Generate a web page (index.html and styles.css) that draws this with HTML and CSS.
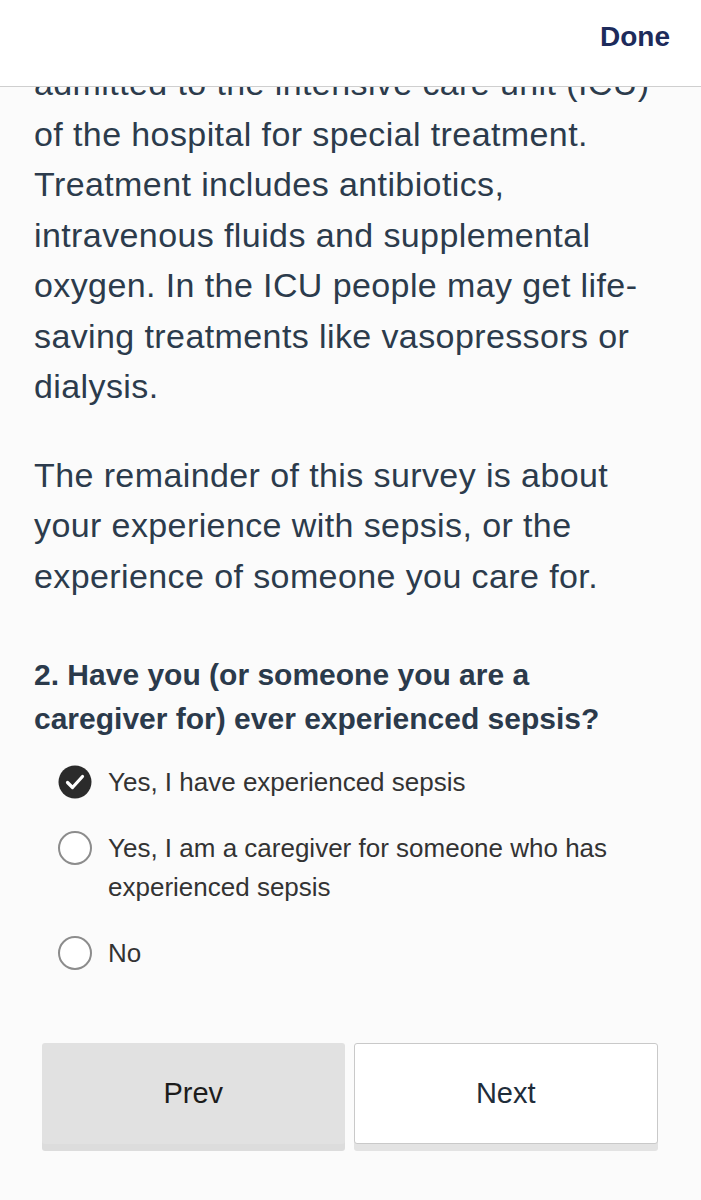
FILE: index.html
```html
<!DOCTYPE html>
<html>
<head>
<meta charset="utf-8">
<link rel="stylesheet" href="styles.css">
</head>
<body>
<header class="topbar">
  <span class="done">Done</span>
</header>
<main class="content">
  <p class="para">admitted to the intensive care unit (ICU) of the hospital for special treatment. Treatment includes antibiotics, intravenous fluids and supplemental oxygen. In the ICU people may get life-saving treatments like vasopressors or dialysis.</p>
  <p class="para">The remainder of this survey is about your experience with sepsis, or the experience of someone you care for.</p>
  <h2 class="question">2. Have you (or someone you are a caregiver for) ever experienced sepsis?</h2>
  <div class="options">
    <div class="option">
      <span class="radio checked">
        <svg viewBox="0 0 34 34" width="34" height="34"><circle cx="17" cy="17" r="16.5" fill="#2b2b2b"/><path d="M9.5 17.5 L14.5 22.5 L24.5 11.5" fill="none" stroke="#fff" stroke-width="3.2" stroke-linecap="round" stroke-linejoin="round"/></svg>
      </span>
      <span class="label">Yes, I have experienced sepsis</span>
    </div>
    <div class="option">
      <span class="radio"></span>
      <span class="label">Yes, I am a caregiver for someone who has experienced sepsis</span>
    </div>
    <div class="option">
      <span class="radio"></span>
      <span class="label">No</span>
    </div>
  </div>
  <div class="buttons">
    <button class="btn prev">Prev</button>
    <button class="btn next">Next</button>
  </div>
</main>
</body>
</html>
```
FILE: styles.css
```css
html, body {
  margin: 0;
  padding: 0;
  background: #fbfbfb;
  font-family: "Liberation Sans", Arial, sans-serif;
}
.topbar {
  position: fixed;
  top: 0;
  left: 0;
  right: 0;
  height: 86px;
  background: #ffffff;
  border-bottom: 1px solid #cfcfcf;
  display: flex;
  align-items: center;
  justify-content: flex-end;
  padding-right: 31px;
  box-sizing: content-box;
  z-index: 10;
}
.done {
  color: #1d2b5b;
  font-size: 28px;
  font-weight: bold;
  margin-top: -12px;
}
.content {
  padding: 58px 30px 0 34px;
}
.para {
  margin: 0 0 38px 0;
  font-size: 34px;
  letter-spacing: 0.4px;
  line-height: 50.5px;
  color: #2c3b4c;
}
.question {
  margin: 52px 30px 0 0;
  font-size: 30px;
  line-height: 44px;
  font-weight: bold;
  color: #2b3a4b;
}
.options {
  margin-top: 22px;
  padding-left: 24px;
  display: flex;
  flex-direction: column;
  gap: 27px;
}
.option {
  display: flex;
  align-items: flex-start;
  gap: 16px;
}
.radio {
  flex: none;
  width: 34px;
  height: 34px;
  margin-top: 2px;
  box-sizing: border-box;
  border: 2px solid #8c8c8c;
  border-radius: 50%;
  background: #fff;
}
.radio.checked {
  border: none;
  background: none;
}
.radio svg { display: block; }
.label {
  font-size: 26px;
  line-height: 39px;
  color: #333;
}
.buttons {
  display: flex;
  align-items: flex-start;
  gap: 9px;
  margin: 70px 13px 0 8px;
}
.btn {
  flex: 1;
  height: 101px;
  margin-bottom: 7px;
  font-family: "Liberation Sans", Arial, sans-serif;
  font-size: 29px;
  border-radius: 3px;
  cursor: pointer;
}
.prev {
  background: #e1e1e1;
  border: none;
  color: #1c1c1c;
  box-shadow: 0 7px 0 #dcdcdc;
}
.next {
  background: #ffffff;
  border: 1px solid #c9c9c9;
  color: #1f2d3a;
  box-shadow: 0 7px 0 #e3e3e3;
}
```
